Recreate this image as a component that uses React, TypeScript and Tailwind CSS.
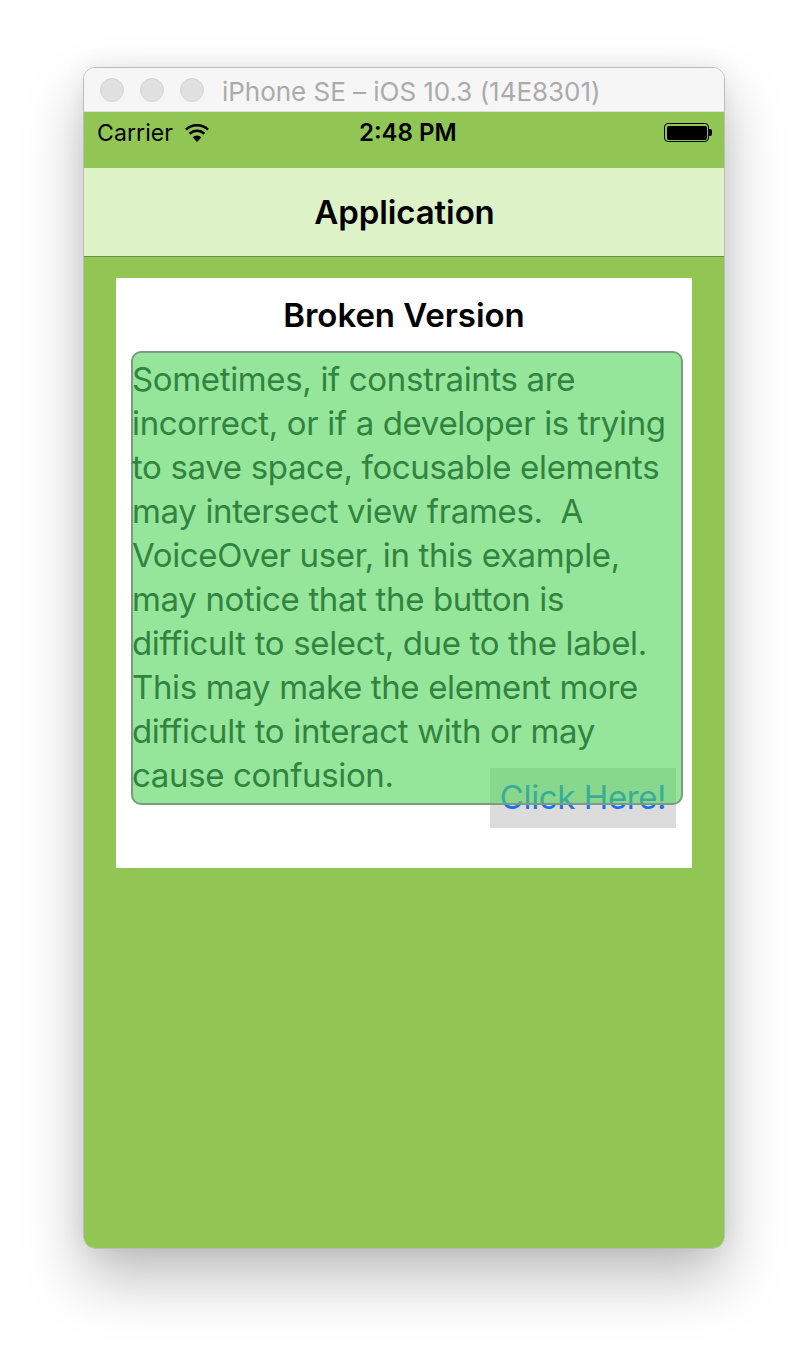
import React from 'react';

const sf = "font-['Inter','Liberation_Sans',sans-serif]";

const Light: React.FC = () => (
  <div className="h-[24px] w-[24px] rounded-full border border-[#d4d4d4] bg-[#e0e0e0]" />
);

const Wifi: React.FC = () => (
  <svg width="24" height="18" viewBox="0 0 24 18" className="ml-[12px] mt-[-1px]">
    <path d="M12 18 L7.6 13.2 A6.4 6.4 0 0 1 16.4 13.2 Z" fill="#000" />
    <path d="M4.6 9.8 A10.6 10.6 0 0 1 19.4 9.8" fill="none" stroke="#000" strokeWidth="2.6" />
    <path d="M1 5.6 A16 16 0 0 1 23 5.6" fill="none" stroke="#000" strokeWidth="2.6" />
  </svg>
);

const Battery: React.FC = () => (
  <div className="mr-[-1px] mt-[3px] flex items-center">
    <div className="h-[19px] w-[45px] rounded-[4px] border border-black p-[1.5px]">
      <div className="h-full w-full rounded-[2px] bg-black" />
    </div>
    <div className="h-[7px] w-[3px] rounded-r-[2px] bg-black" />
  </div>
);

const App: React.FC = () => {
  return (
    <div className={`h-[1348px] w-[808px] overflow-hidden bg-white pl-[83px] pt-[67px] ${sf}`}>
      <div className="flex h-[1182px] w-[642px] flex-col overflow-hidden rounded-[12px] border border-[#bcbcbc] shadow-[0_30px_60px_rgba(0,0,0,0.25),0_0_24px_rgba(0,0,0,0.07)]">
        <div className="flex h-[44px] shrink-0 items-center gap-[16px] border-b border-[#dcdcdc] bg-[#f6f6f6] pl-[16px] pt-[1px]">
          <Light />
          <Light />
          <Light />
          <span className="ml-[2px] mt-[2px] text-[26px] tracking-[-0.03px] text-[#ababab]">iPhone SE – iOS 10.3 (14E8301)</span>
        </div>
        <div className="flex flex-1 flex-col bg-[#91c554]">
          <div className="relative flex h-[56px] shrink-0 items-start justify-between px-[13px] pt-[8px]">
            <div className="flex items-center text-[23px] leading-[26px] tracking-[0.1px] text-black">
              Carrier
              <Wifi />
            </div>
            <span className="absolute left-[275px] top-[8px] text-[24px] font-semibold leading-[26px] text-black">2:48 PM</span>
            <Battery />
          </div>
          <div className="flex h-[89px] shrink-0 items-center justify-center border-b border-[#6f8f4b] bg-[#def2c8] pl-[1px] pt-[2px] text-[33px] font-semibold tracking-[-0.1px] text-black">
            Application
          </div>
          <div className="ml-[32px] mt-[21px] h-[590px] w-[576px] bg-white pt-[16px]">
            <h1 className="text-center text-[33px] font-semibold leading-[42px] tracking-[-0.05px] text-black">Broken Version</h1>
            <div className="relative z-10 ml-[15px] mt-[15px] h-[454px] w-[552px] rounded-[10px] border-2 border-[#7f9a82] bg-[#4fd659]/60 text-[33px] leading-[44px] tracking-[-0.35px] text-[#31833f]">
              <p className="ml-[-1px] pt-[4px]">
                Sometimes, if constraints are
                <br />
                incorrect, or if a developer is trying
                <br />
                to save space, focusable elements
                <br />
                may intersect view frames.&nbsp; A
                <br />
                VoiceOver user, in this example,
                <br />
                may notice that the button is
                <br />
                difficult to select, due to the label.
                <br />
                This may make the element more
                <br />
                difficult to interact with or may
                <br />
                cause confusion.
              </p>
            </div>
            <button className="relative ml-[374px] mt-[-37px] flex h-[60px] w-[186px] items-center justify-center bg-[#dcdcdc] text-[33px] tracking-[-0.4px] text-[#1c6ef2]">
              Click Here!
            </button>
          </div>
        </div>
      </div>
    </div>
  );
};

export default App;
